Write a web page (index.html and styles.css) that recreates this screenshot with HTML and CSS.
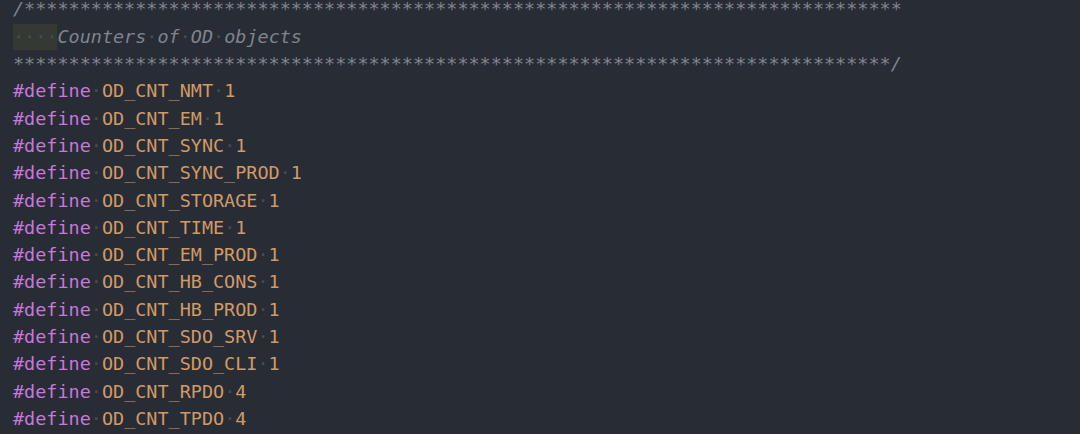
FILE: index.html
```html
<!DOCTYPE html>
<html>
<head>
<meta charset="utf-8">
<link rel="stylesheet" href="styles.css">
</head>
<body>
<div class="editor">
<div class="line"><span class="cm">/*******************************************************************************</span></div>
<div class="line"><span class="hl"><span class="ws">····</span></span><span class="cm">Counters<span class="ws">·</span>of<span class="ws">·</span>OD<span class="ws">·</span>objects</span></div>
<div class="line"><span class="cm">*******************************************************************************/</span></div>
<div class="line"><span class="kw">#define</span><span class="ws">·</span><span class="id">OD_CNT_NMT</span><span class="ws">·</span><span class="num">1</span></div>
<div class="line"><span class="kw">#define</span><span class="ws">·</span><span class="id">OD_CNT_EM</span><span class="ws">·</span><span class="num">1</span></div>
<div class="line"><span class="kw">#define</span><span class="ws">·</span><span class="id">OD_CNT_SYNC</span><span class="ws">·</span><span class="num">1</span></div>
<div class="line"><span class="kw">#define</span><span class="ws">·</span><span class="id">OD_CNT_SYNC_PROD</span><span class="ws">·</span><span class="num">1</span></div>
<div class="line"><span class="kw">#define</span><span class="ws">·</span><span class="id">OD_CNT_STORAGE</span><span class="ws">·</span><span class="num">1</span></div>
<div class="line"><span class="kw">#define</span><span class="ws">·</span><span class="id">OD_CNT_TIME</span><span class="ws">·</span><span class="num">1</span></div>
<div class="line"><span class="kw">#define</span><span class="ws">·</span><span class="id">OD_CNT_EM_PROD</span><span class="ws">·</span><span class="num">1</span></div>
<div class="line"><span class="kw">#define</span><span class="ws">·</span><span class="id">OD_CNT_HB_CONS</span><span class="ws">·</span><span class="num">1</span></div>
<div class="line"><span class="kw">#define</span><span class="ws">·</span><span class="id">OD_CNT_HB_PROD</span><span class="ws">·</span><span class="num">1</span></div>
<div class="line"><span class="kw">#define</span><span class="ws">·</span><span class="id">OD_CNT_SDO_SRV</span><span class="ws">·</span><span class="num">1</span></div>
<div class="line"><span class="kw">#define</span><span class="ws">·</span><span class="id">OD_CNT_SDO_CLI</span><span class="ws">·</span><span class="num">1</span></div>
<div class="line"><span class="kw">#define</span><span class="ws">·</span><span class="id">OD_CNT_RPDO</span><span class="ws">·</span><span class="num">4</span></div>
<div class="line"><span class="kw">#define</span><span class="ws">·</span><span class="id">OD_CNT_TPDO</span><span class="ws">·</span><span class="num">4</span></div>
</div>
</body>
</html>
```
FILE: styles.css
```css
html, body {
  margin: 0;
  padding: 0;
  background: #282c34;
  height: 100%;
  overflow: hidden;
}
.editor {
  margin-top: -4.8px;
  padding-left: 13px;
  font-family: "DejaVu Sans Mono", "Liberation Mono", monospace;
  font-size: 18.47px;
  line-height: 27.33px;
  color: #abb2bf;
}
.line {
  height: 27.33px;
  white-space: pre;
}
.cm {
  color: #7f848e;
  font-style: italic;
}
.hl {
  background: #343a33;
  display: inline-block;
  height: 26px;
  vertical-align: top;
  margin-top: 1px;
  line-height: 25px;
}
.ws {
  color: #474d57;
  font-style: normal;
}
.kw {
  color: #c678dd;
}
.id {
  color: #d19a66;
}
.num {
  color: #d19a66;
}
```
